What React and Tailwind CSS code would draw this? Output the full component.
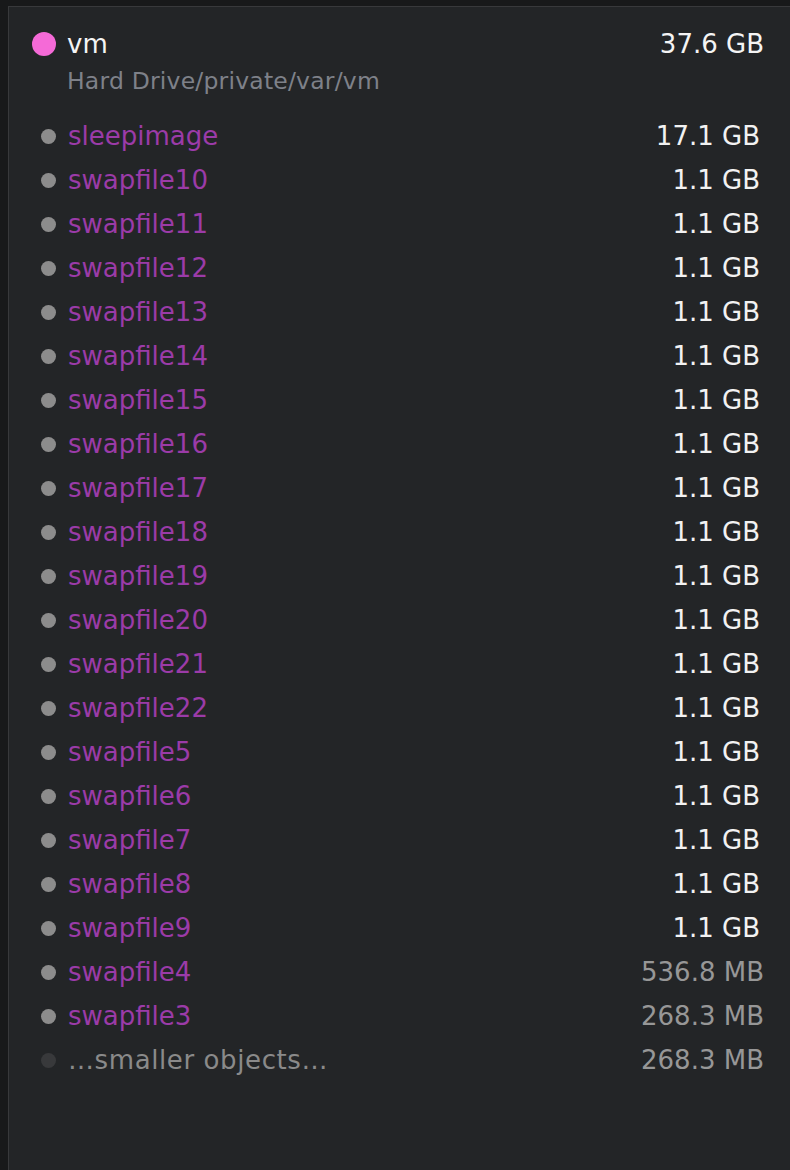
import React from 'react';

const files = [
  { name: 'sleepimage', size: '17.1 GB', big: true },
  { name: 'swapfile10', size: '1.1 GB', big: true },
  { name: 'swapfile11', size: '1.1 GB', big: true },
  { name: 'swapfile12', size: '1.1 GB', big: true },
  { name: 'swapfile13', size: '1.1 GB', big: true },
  { name: 'swapfile14', size: '1.1 GB', big: true },
  { name: 'swapfile15', size: '1.1 GB', big: true },
  { name: 'swapfile16', size: '1.1 GB', big: true },
  { name: 'swapfile17', size: '1.1 GB', big: true },
  { name: 'swapfile18', size: '1.1 GB', big: true },
  { name: 'swapfile19', size: '1.1 GB', big: true },
  { name: 'swapfile20', size: '1.1 GB', big: true },
  { name: 'swapfile21', size: '1.1 GB', big: true },
  { name: 'swapfile22', size: '1.1 GB', big: true },
  { name: 'swapfile5', size: '1.1 GB', big: true },
  { name: 'swapfile6', size: '1.1 GB', big: true },
  { name: 'swapfile7', size: '1.1 GB', big: true },
  { name: 'swapfile8', size: '1.1 GB', big: true },
  { name: 'swapfile9', size: '1.1 GB', big: true },
  { name: 'swapfile4', size: '536.8 MB', big: false },
  { name: 'swapfile3', size: '268.3 MB', big: false },
];

const FileRow = ({ name, size, big }) => (
  <div className={`flex items-center h-[44px] pl-[32px] ${big ? 'pr-[30px]' : 'pr-[26px]'}`}>
    <span className="w-[15px] h-[15px] rounded-full bg-[#8c8c8c] mr-[12px] shrink-0" />
    <span className="flex-1 text-[#9b3ba8]">{name}</span>
    <span className={big ? 'text-[#f2f2f2]' : 'text-[#979797]'}>{size}</span>
  </div>
);

export default function App() {
  return (
    <div className="w-[790px] h-[1170px] bg-[#18191a] pt-[6px] pl-[8px] overflow-hidden font-['DejaVu_Sans',sans-serif]">
      <div className="h-full bg-[#232527] border-t border-l border-[#38393b] text-[26px]">
        {/* Folder header */}
        <div className="flex items-center h-[44px] mt-[15px] pl-[23px] pr-[26px]">
          <span className="w-[24px] h-[24px] rounded-full bg-[#f56ad7] mr-[11px] shrink-0" />
          <span className="flex-1 text-[#f4f4f4]">vm</span>
          <span className="text-[#f4f4f4]">37.6 GB</span>
        </div>
        <div className="h-[30px] leading-[30px] pl-[58px] text-[23.5px] tracking-[0.2px] text-[#7e8189]">
          Hard Drive/private/var/vm
        </div>

        {/* Contents */}
        <div className="mt-[18px]">
          {files.map((f) => (
            <FileRow key={f.name} {...f} />
          ))}
          <div className="flex items-center h-[44px] pl-[32px] pr-[26px]">
            <span className="w-[15px] h-[15px] rounded-full bg-[#38393b] mr-[12px] shrink-0" />
            <span className="flex-1 text-[#8a8a8a] tracking-[0.6px]">…smaller objects…</span>
            <span className="text-[#979797]">268.3 MB</span>
          </div>
        </div>
      </div>
    </div>
  );
}
